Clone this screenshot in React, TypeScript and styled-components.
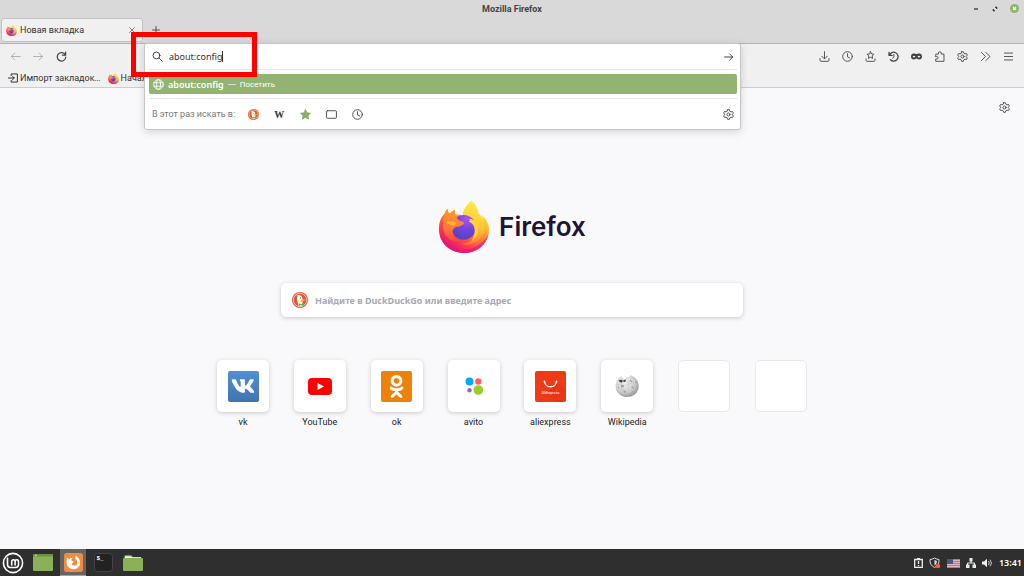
import React, { useState } from 'react';
import styled, { createGlobalStyle, css } from 'styled-components';
import { FaVk, FaOdnoklassniki } from 'react-icons/fa';

const Global = createGlobalStyle`
  *, *::before, *::after { box-sizing: border-box; }
  body { margin: 0; background: #f9f9fb; font-family: Roboto, "Noto Sans", sans-serif; font-size: 9px; color: #333; }
  button, input { font: inherit; color: inherit; }
  button { border: 0; padding: 0; background: none; cursor: pointer; }
  svg { display: block; flex: none; }
`;

const Desktop = styled.div`
  display: flex;
  flex-direction: column;
  min-height: 100vh;
`;

const TitleBar = styled.header`
  display: grid;
  grid-template-columns: 1fr auto 1fr;
  align-items: center;
  height: 17px;
  padding: 0 5px;
  background: #d9d9d9;
  color: #444;
`;

const WindowTitle = styled.h1`
  grid-column: 2;
  margin: 0;
  font-size: 9px;
  line-height: 16px;
  font-weight: 700;
`;

const WindowControls = styled.div`
  display: flex;
  justify-content: flex-end;
  gap: 9px;
`;

const TabStrip = styled.div`
  display: flex;
  align-items: center;
  height: 26px;
  padding: 0 1px;
  background: #d9d9d9;
`;

const Tab = styled.div`
  display: flex;
  align-items: center;
  gap: 3px;
  width: 142px;
  height: 24px;
  padding: 0 5px 0 4px;
  border: 1px solid #c2c2c2;
  border-radius: 3px;
  background: #f0f0f0;
`;

const TabTitle = styled.span`
  flex: 1;
  line-height: 12px;
`;

const IconButton = styled.button<{ $size?: number; $faded?: boolean }>`
  display: grid;
  place-items: center;
  width: ${(p) => p.$size ?? 23}px;
  height: ${(p) => p.$size ?? 23}px;
  color: ${(p) => (p.$faded ? '#a8a8a8' : '#444')};
`;

const Chrome = styled.div`
  border-top: 1px solid #b2b2b2;
  border-bottom: 1px solid #ccc;
  background: #f0f0f0;
`;

const NavBar = styled.nav`
  display: flex;
  align-items: center;
  height: 25px;
  padding: 0 4px;
`;

const UrlSlot = styled.div`
  position: relative;
  flex: 1;
  align-self: stretch;
  margin: 0 72px 0 71px;
`;

const UrlPanel = styled.div`
  position: absolute;
  z-index: 1;
  top: -1px;
  left: 0;
  right: 0;
  padding: 0 3px 0 4px;
  border: 1px solid #c4c4c4;
  border-radius: 3px;
  background: #fff;
  box-shadow: 0 2px 8px rgba(0, 0, 0, 0.15);
`;

const UrlRow = styled.form`
  display: flex;
  align-items: center;
  gap: 6px;
  height: 26px;
  padding: 0 3px;
  border-bottom: 1px solid #e4e4e4;
`;

const UrlField = styled.div`
  display: flex;
  flex: 1;
  align-items: center;
  min-width: 0;
`;

const UrlInput = styled.input`
  field-sizing: content;
  padding: 0;
  border: 0;
  outline: 0;
  background: none;
  caret-color: transparent;
  font-family: "Noto Sans", sans-serif;
  font-size: 9px;
  line-height: 14px;
`;

const Caret = styled.span`
  width: 1px;
  height: 11px;
  margin-left: -1px;
  background: #333;
`;

const Suggestion = styled.button`
  display: flex;
  align-items: center;
  gap: 4px;
  width: 100%;
  height: 20px;
  margin: 4px 0;
  padding: 0 4px;
  border-radius: 2px;
  background: #92b372;
  color: #fff;
`;

const SuggestedUrl = styled.span`
  font-family: "Noto Sans", sans-serif;
  font-weight: 600;
`;

const Visit = styled.span`
  font-size: 8px;
`;

const Dash = styled.span`
  width: 8px;
  height: 1px;
  background: #d5e2c8;
`;

const Engines = styled.div`
  display: flex;
  align-items: center;
  height: 31px;
  padding: 0 3px;
  border-top: 1px solid #e4e4e4;
  color: #777;
`;

const EngineList = styled.div`
  display: flex;
  flex: 1;
  margin-left: 5px;
`;

const Bookmarks = styled.div`
  display: flex;
  align-items: center;
  gap: 7px;
  height: 18px;
  padding: 0 8px;
`;

const Bookmark = styled.a`
  display: flex;
  align-items: center;
  gap: 2px;
  color: #333;
  text-decoration: none;
  white-space: nowrap;
`;

const Page = styled.main`
  position: relative;
  display: flex;
  flex: 1;
  flex-direction: column;
  align-items: center;
  padding: 113px 16px 0;
  background: #f9f9fb;
`;

const Customize = styled.div`
  position: absolute;
  top: 8px;
  right: 8px;
`;

const Brand = styled.div`
  display: flex;
  align-items: center;
  gap: 9px;
  height: 52px;
`;

const Wordmark = styled.span`
  color: #20123a;
  font-family: Inter, sans-serif;
  font-size: 26px;
  font-weight: 600;
  line-height: 32px;
`;

const Card = css`
  background: #fff;
  border-radius: 5px;
  box-shadow: 0 1px 4px rgba(58, 57, 68, 0.24);
`;

const SearchBox = styled.label`
  ${Card}
  display: flex;
  align-items: center;
  gap: 7px;
  width: 100%;
  max-width: 462px;
  height: 34px;
  margin-top: 30px;
  padding: 0 11px;
`;

const SearchInput = styled.input`
  flex: 1;
  padding: 0;
  border: 0;
  outline: 0;
  background: none;
  font-family: "Noto Sans", sans-serif;
  font-size: 9px;
  font-weight: 700;
  &::placeholder { color: #a9a8b2; opacity: 1; }
`;

const Tiles = styled.div`
  display: flex;
  justify-content: space-between;
  width: 100%;
  max-width: 590px;
  margin-top: 43px;
`;

const Tile = styled.a`
  display: flex;
  flex-direction: column;
  align-items: center;
  gap: 4px;
  width: 52px;
  color: #222;
  line-height: 12px;
  text-decoration: none;
`;

const TileFace = styled.span<{ $empty?: boolean }>`
  ${Card}
  display: grid;
  place-items: center;
  width: 52px;
  height: 52px;
  ${(p) => p.$empty && css`box-shadow: none; border: 1px solid #e8e8ea;`}
`;

const Badge = styled.span<{ $bg: string }>`
  display: grid;
  place-items: center;
  width: 31px;
  height: 31px;
  border-radius: 2px;
  background: ${(p) => p.$bg};
  color: #fff;
`;

const Taskbar = styled.footer`
  display: flex;
  align-items: center;
  justify-content: space-between;
  height: 27px;
  background: #2f2f2f;
  color: #fff;
`;

const Launchers = styled.div`
  display: flex;
  gap: 4px;
`;

const Launcher = styled.button<{ $active?: boolean }>`
  display: grid;
  place-items: center;
  width: 26px;
  height: 27px;
  ${(p) => p.$active && css`background: #656565; border-bottom: 1px solid #92b372;`}
`;

const Tray = styled.div`
  display: flex;
  align-items: center;
  gap: 6px;
  padding: 1px 2px 0 0;
`;

const Clock = styled.time`
  font-family: "Noto Sans", sans-serif;
  font-size: 9px;
  font-weight: 600;
  line-height: 12px;
`;

const Highlight = styled.div`
  position: absolute;
  z-index: 2;
  top: -12px;
  left: -13px;
  width: 126px;
  height: 45px;
  border: 5px solid #fe0000;
  pointer-events: none;
`;

function Firefox({ size, id }: { size: number; id: string }) {
  const u = (n: string) => `url(#${id}${n})`;
  return (
    <svg width={size} height={size} viewBox="0 0 152 156" aria-hidden="true">
      <defs>
        <linearGradient id={id + 'a'} x1="0.85" y1="0.1" x2="0.25" y2="0.95">
          <stop offset="0" stopColor="#fff44f" />
          <stop offset="0.3" stopColor="#ffb52e" />
          <stop offset="0.55" stopColor="#ff7139" />
          <stop offset="0.8" stopColor="#fb3551" />
          <stop offset="1" stopColor="#e01078" />
        </linearGradient>
        <radialGradient id={id + 'b'} cx="0.65" cy="0.15" r="0.9">
          <stop offset="0" stopColor="#a855f0" />
          <stop offset="0.5" stopColor="#7542e0" />
          <stop offset="1" stopColor="#4d45b8" />
        </radialGradient>
        <linearGradient id={id + 'c'} x1="0.7" y1="0" x2="0.5" y2="1">
          <stop offset="0" stopColor="#fff14d" />
          <stop offset="0.55" stopColor="#ffc735" />
          <stop offset="1" stopColor="#ff7a36" />
        </linearGradient>
        <linearGradient id={id + 'd'} x1="0" y1="0" x2="0" y2="1">
          <stop offset="0" stopColor="#ff9a2b" />
          <stop offset="0.6" stopColor="#ff7a38" />
          <stop offset="1" stopColor="#fd4a48" />
        </linearGradient>
      </defs>
      <path fill={u('a')} d="M99 0C111 11 118 24 119 38C126 42 130 48 133 55C133 49 131 44 129 41C142 51 152 70 151 87C150 127 118 156 77 156C34 156 0 125 1 83C1 61 9 46 19 37C20 31 22 27 27 23C27 31 29 35 33 38C38 32 43 28 49 26C47 32 48 38 51 41C58 39 67 41 73 44C73 28 84 10 99 0Z" />
      <path fill="#e31587" opacity="0.7" d="M3 99C16 134 49 151 86 145C113 140 138 123 149 98C143 133 113 156 77 156C40 156 9 133 3 99Z" />
      <path fill={u('c')} d="M99 0C111 11 118 24 119 38C137 51 143 82 131 102C119 125 92 136 70 128C94 128 113 113 116 92C118 72 108 54 91 47C83 43 78 41 73 44C73 28 84 10 99 0Z" />
      <circle cx="75" cy="79" r="37" fill={u('b')} />
      <path fill={u('d')} d="M19 37C20 31 22 27 27 23C27 31 29 35 33 38C38 32 43 28 49 26C47 32 48 38 51 41C52 47 56 53 61 58C67 62 76 61 76 66C76 71 67 74 60 77C51 77 43 80 42 92C43 105 50 113 62 118C42 126 17 108 14 84C12 67 13 49 19 37Z" />
      <path fill="#ffb52e" d="M22 64C32 59 45 60 54 66C51 71 44 77 38 73C32 69 27 68 22 64Z" />
      <path fill="#ffd03a" d="M90 54C107 51 121 67 118 89C116 105 108 116 98 120C108 106 111 88 105 75C102 67 96 64 90 62C95 60 96 57 90 54Z" />
    </svg>
  );
}

function Duck({ size }: { size: number }) {
  return (
    <svg width={size} height={size} viewBox="0 0 48 48" aria-hidden="true">
      <circle cx="24" cy="24" r="24" fill="#de5833" />
      <circle cx="24" cy="24" r="20" fill="none" stroke="#fff" strokeWidth="2" />
      <path fill="#fff" d="M15 10C22 7 31 11 31 20C32 25 31 32 33 40C28 43 23 43 20 41C18 33 15 26 15 20C15 16 18 14 15 10Z" />
      <path fill="#fdb913" d="M25 24C30 22 36 20 39 23C37 28 31 27 33 30C28 31 24 28 25 24Z" />
      <path fill="#57b747" d="M20 34L28 36L35 32V42L28 39L21 42Z" />
      <circle cx="25" cy="18" r="2" fill="#2d4f8e" />
    </svg>
  );
}

type IconName = keyof typeof shapes;
const shapes = {
  back: <path d="M15 8H2M7 3L2 8l5 5" />,
  forward: <path d="M1 8h13M9 3l5 5-5 5" />,
  reload: <path d="M13.500 5.500A6.200 6.200 0 1 0 14.200 9M14 1.500v4.500H9.500" strokeWidth="1.800" />,
  search: <><circle cx="6.500" cy="6.500" r="5" /><path d="M10.200 10.200L15 15" /></>,
  close: <path d="M3 3l10 10M13 3L3 13" />,
  plus: <path d="M8 1v14M1 8h14" />,
  download: <path d="M8 1v10M4 7.500l4 4 4-4M1.500 11v2.500q0 1.500 1.500 1.500h10q1.500 0 1.500-1.500V11" />,
  clock: <><circle cx="8" cy="8" r="7" /><path d="M8 4v4.500l3 1.500" /></>,
  starTray: <path d="M8 1l1.500 3.200 3.500.5-2.500 2.500.6 3.500L8 9.100l-3.100 1.600.6-3.500L3 4.700l3.500-.5zM1.500 11.500v2q0 1.500 1.500 1.500h10q1.500 0 1.500-1.500v-2" />,
  history: <><path d="M1.500 2v4.500H6M2 6.200A6.500 6.500 0 1 1 3.500 12.800" strokeWidth="1.900" /><path d="M8.500 5v4L6.500 10.500" /></>,
  mask: <path fill="currentColor" fillRule="evenodd" stroke="none" d="M4 3.500C6 3.500 7 4.300 8 4.300S10 3.500 12 3.500C15 3.500 16 5.500 16 8S14.500 12.500 12 12.500C10 12.500 9 11 8 11S6 12.500 4 12.500C1.500 12.500 0 10.500 0 8S1 3.500 4 3.500ZM2.300 8.300C3.200 6.500 5.500 6.500 6.500 8.300C5.500 9.800 3.200 9.800 2.300 8.300ZM9.500 8.300C10.500 6.500 12.800 6.500 13.700 8.300C12.800 9.800 10.500 9.800 9.500 8.300Z" />,
  puzzle: <path d="M2.500 6.500V4.500h4V3q0-2 2-2t2 2v1.500h4V15h-12v-3.500H4q2 0 2-1.700T4 8H2.500z" />,
  gear: (
    <>
      <path d="M6.700 1h2.600l.6 2.200 1.700 1 2.200-.6 1.300 2.300L13.500 7.500v1l1.600 1.600-1.300 2.300-2.200-.6-1.700 1-.6 2.200H6.700l-.6-2.200-1.700-1-2.200.6L.9 10.100l1.600-1.600v-1L.9 5.900l1.300-2.300 2.200.6 1.700-1z" />
      <circle cx="8" cy="8" r="2.200" />
    </>
  ),
  more: <path d="M2 2l6 6-6 6M8.500 2l6 6-6 6" />,
  menu: <path d="M2 3h12M2 8h12M2 13h12" />,
  globe: <><circle cx="8" cy="8" r="7" /><ellipse cx="8" cy="8" rx="3" ry="7" /><path d="M1.500 5.500h13M1.500 10.500h13" /></>,
  importIn: <path d="M5 4V1.500h10v13H5V12M0 8h10M7 5l3 3-3 3" />,
  tabs: <rect x="0.800" y="2.500" width="14.400" height="11" rx="1.500" />,
  star: <path fill="#86b165" stroke="#86b165" d="M8 1l2.200 4.600 5 .6-3.700 3.500 1 5L8 12.200 3.500 14.700l1-5L.8 6.200l5-.6z" />,
};

function Icon({ name, size = 11, weight = 1.3 }: { name: IconName; size?: number; weight?: number }) {
  return (
    <svg width={size} height={size} viewBox="0 0 16 16" fill="none" stroke="currentColor" strokeWidth={weight} strokeLinejoin="round" strokeLinecap="round" aria-hidden="true">
      {shapes[name]}
    </svg>
  );
}

const YouTube = () => (
  <svg width="24" height="17" viewBox="0 0 24 17"><rect width="24" height="17" rx="4" fill="#f00" /><path d="M9.500 5v7l6.500-3.500z" fill="#fff" /></svg>
);

const Avito = () => (
  <svg width="18" height="18" viewBox="0 0 18 18">
    <circle cx="4.500" cy="4.500" r="4" fill="#0af" /><circle cx="13.300" cy="4.500" r="3.200" fill="#ff6163" />
    <circle cx="4.500" cy="13.200" r="2.200" fill="#965eeb" /><circle cx="13.300" cy="13" r="4.800" fill="#97cf26" />
  </svg>
);

const AliExpress = () => (
  <svg width="31" height="31" viewBox="0 0 31 31">
    <rect width="31" height="31" rx="2" fill="#f03a17" />
    <path d="M22 11L31 20V29q0 2-2 2H21L12 22z" fill="#df3212" opacity="0.5" />
    <path d="M9.500 10.500C10.500 17.500 20.500 17.500 21.500 10.500" fill="none" stroke="#fff" strokeWidth="1.300" />
    <circle cx="9.500" cy="10.500" r="0.900" fill="#fff" /><circle cx="21.500" cy="10.500" r="0.900" fill="#fff" />
    <text x="15.500" y="23" textAnchor="middle" fontSize="4" fontFamily="Lato, sans-serif" fill="#fff">AliExpress</text>
  </svg>
);

const Wikipedia = () => (
  <svg width="24" height="24" viewBox="0 0 72 72">
    <defs><radialGradient id="wk" cx="0.4" cy="0.35" r="0.7"><stop offset="0" stopColor="#f0f0f0" /><stop offset="0.6" stopColor="#d2d2d2" /><stop offset="1" stopColor="#8a8a8a" /></radialGradient></defs>
    <path fill="url(#wk)" d="M14 10L20 6L23 13L31 15L35 8L39 11L47 4C62 9 71 21 71 37C71 56 55 69 36 69C17 69 2 55 2 36C2 25 7 16 14 10Z" />
    <path fill="#444" d="M11 19L19 17L24 20L31 16L33 22L29 24L23 22L20 26L14 24Z" />
    <path fill="none" stroke="#bbb" strokeWidth="1.200" d="M4 33Q14 28 20 33T37 31T54 33T70 31M5 48Q17 44 24 49T44 48T66 49M20 27Q16 40 22 50T28 68M38 22Q44 36 39 48T44 68M56 9Q52 23 57 36T53 63" />
    <path fill="none" stroke="#777" strokeWidth="2" d="M20 34h5v5h-5zM43 22l5-3 2 6M49 39h5v5M25 51l6 2-2 4M51 55l3-3M9 38l2 4M61 23l3 4" />
  </svg>
);

const Mint = () => (
  <svg width="22" height="22" viewBox="0 0 22 22" fill="none" stroke="#fff" strokeWidth="1.600">
    <circle cx="11" cy="11" r="9.600" />
    <path d="M5.500 6v6.500q0 3 3 3h5q3 0 3-3V9.500q0-1.700-1.700-1.700t-1.700 1.700V13M13.100 9.500q0-1.700-1.700-1.700T9.700 9.500V13" strokeLinecap="round" />
  </svg>
);

const Desk = () => (
  <svg width="20" height="17" viewBox="0 0 20 17"><rect width="20" height="17" rx="1" fill="#8bb158" /><path d="M0 1q0-1 1-1h18q1 0 1 1v1.500H0z" fill="#6c9140" /><path d="M2 1.300h2" stroke="#cfe0b8" /></svg>
);

const FirefoxTask = () => (
  <svg width="19" height="19" viewBox="0 0 54 54">
    <rect width="54" height="54" rx="8" fill="#f58a3c" />
    <path fill="#fff" d="M9 13L15 17C19 14 23 14 25 15C21 17 20 20 22 22L28 24C26 28 22 28 22 32C25 37 34 36 37 31C39 26 37 21 33 17C31 14 32 11 34 8C43 13 48 24 45 34C40 45 28 49 18 44C8 39 5 27 9 13Z" />
  </svg>
);

const Terminal = () => (
  <svg width="19" height="19" viewBox="0 0 19 19">
    <rect x="0.500" y="0.500" width="18" height="18" rx="3" fill="#222" stroke="#444" />
    <text x="2.500" y="7" fontSize="6" fontFamily="Liberation Mono, monospace" fontWeight="700" fill="#fff">$_</text>
  </svg>
);

const Folder = () => (
  <svg width="20" height="16" viewBox="0 0 20 16"><path d="M1 2q0-2 2-2h5l2 2h7q2 0 2 2H1z" fill="#6f9544" /><path d="M2 1.200h6l1.500 1H18v2H2z" fill="#f4f4f4" /><rect y="3" width="20" height="13" rx="1" fill="#8bb158" /></svg>
);

const Update = () => (
  <svg width="9" height="10" viewBox="0 0 9 10" fill="none" stroke="#eee" strokeWidth="1.300"><path d="M.7 1.500h7.600v7.800H.7zM3 .7h3" /><path d="M4.500 3v3M4.500 7v1.200" /></svg>
);

const Shield = () => (
  <svg width="12" height="12" viewBox="0 0 12 12"><path d="M5.500 1Q8 2.500 10 2.500Q10.500 8 5.500 10.500Q.5 8 1 2.500Q3 2.500 5.500 1Z" fill="none" stroke="#ddd" /><path d="M5.500 3v5.500Q8 7 8 4Z" fill="#ddd" /><circle cx="9" cy="9" r="2.300" fill="#f0642d" /></svg>
);

const Flag = () => (
  <svg width="13" height="9" viewBox="0 0 13 9"><rect width="13" height="9" fill="#dcb9bd" /><path d="M0 .5h13M0 2.500h13M0 4.500h13M0 6.500h13M0 8.500h13" stroke="#c9737c" /><rect width="6" height="5" fill="#4a558c" /></svg>
);

const Network = () => (
  <svg width="10" height="10" viewBox="0 0 10 10"><path d="M3.500 0h3v3.500h-3zM0 6.500h3.500V10H0zM6.500 6.500H10V10H6.500z" fill="#eee" /><path d="M5 3v2M1.500 7V5h7v2" fill="none" stroke="#eee" /></svg>
);

const Speaker = () => (
  <svg width="11" height="10" viewBox="0 0 11 10"><path d="M0 3.500h2L5 .8v8.400L2 6.500H0z" fill="#eee" /><path d="M6.500 3q1.500 2 0 4M8 1.700q3 3.300 0 6.600" fill="none" stroke="#ccc" /></svg>
);

const tools: [IconName, string][] = [
  ['download', 'Загрузки'], ['clock', 'История'], ['starTray', 'Закладки'], ['history', 'Восстановить'],
  ['mask', 'Приватное окно'], ['puzzle', 'Расширения'], ['gear', 'Настройки'], ['more', 'Ещё'], ['menu', 'Меню'],
];

const sites = [
  { name: 'vk', face: <Badge $bg="linear-gradient(#5190d3, #3f74b0)"><FaVk size={24} /></Badge> },
  { name: 'YouTube', face: <YouTube /> },
  { name: 'ok', face: <Badge $bg="#ee8208"><FaOdnoklassniki size={23} /></Badge> },
  { name: 'avito', face: <Avito /> },
  { name: 'aliexpress', face: <AliExpress /> },
  { name: 'Wikipedia', face: <Wikipedia /> },
];

const Wiki = styled.span`
  font-family: "Liberation Serif", serif;
  font-size: 10px;
  font-weight: 700;
  color: #333;
`;

export default function App() {
  const [url, setUrl] = useState('about:config');
  return (
    <Desktop>
      <Global />
      <TitleBar>
        <WindowTitle>Mozilla Firefox</WindowTitle>
        <WindowControls>
          <IconButton $size={10} aria-label="Свернуть"><svg width="6" height="6" viewBox="0 0 6 6"><path d="M1 3h4" stroke="#333" strokeWidth="1.300" /></svg></IconButton>
          <IconButton $size={10} aria-label="Развернуть"><svg width="6" height="6" viewBox="0 0 6 6"><path d="M3 1h2v2zM1 3v2h2z" fill="#333" stroke="#333" strokeWidth="0.600" /></svg></IconButton>
          <IconButton $size={10} aria-label="Закрыть"><svg width="9" height="9" viewBox="0 0 9 9"><circle cx="4.500" cy="4.500" r="4.500" fill="#8fb56c" /><path d="M3 3l3 3M6 3L3 6" stroke="#fff" strokeWidth="1.200" /></svg></IconButton>
        </WindowControls>
      </TitleBar>
      <TabStrip>
        <Tab>
          <Firefox size={11} id="t" />
          <TabTitle>Новая вкладка</TabTitle>
          <IconButton $size={10} aria-label="Закрыть вкладку"><Icon name="close" size={8} /></IconButton>
        </Tab>
        <IconButton $size={26} aria-label="Новая вкладка"><Icon name="plus" size={8} weight={1.8} /></IconButton>
      </TabStrip>
      <Chrome>
        <NavBar>
          <IconButton $faded aria-label="Назад"><Icon name="back" /></IconButton>
          <IconButton $faded aria-label="Вперёд"><Icon name="forward" /></IconButton>
          <IconButton aria-label="Обновить"><Icon name="reload" /></IconButton>
          <UrlSlot>
            <UrlPanel>
              <UrlRow onSubmit={(e) => e.preventDefault()}>
                <Icon name="search" size={11} />
                <UrlField>
                  <UrlInput aria-label="Адрес" value={url} onChange={(e) => setUrl(e.target.value)} />
                  <Caret />
                </UrlField>
                <IconButton $size={11} aria-label="Перейти"><Icon name="forward" size={10} weight={1.6} /></IconButton>
              </UrlRow>
              <Suggestion>
                <Icon name="globe" size={11} />
                <SuggestedUrl>about:config</SuggestedUrl>
                <Dash />
                <Visit>Посетить</Visit>
              </Suggestion>
              <Engines>
                В этот раз искать в:
                <EngineList>
                  <IconButton $size={26} aria-label="DuckDuckGo"><Duck size={11} /></IconButton>
                  <IconButton $size={26}><Wiki>W</Wiki></IconButton>
                  <IconButton $size={26} aria-label="Закладки"><Icon name="star" /></IconButton>
                  <IconButton $size={26} aria-label="Вкладки"><Icon name="tabs" /></IconButton>
                  <IconButton $size={26} aria-label="Журнал"><Icon name="clock" /></IconButton>
                </EngineList>
                <IconButton $size={11} aria-label="Настройки поиска"><Icon name="gear" /></IconButton>
              </Engines>
            </UrlPanel>
            <Highlight />
          </UrlSlot>
          {tools.map(([name, label]) => (
            <IconButton key={name} aria-label={label}><Icon name={name} /></IconButton>
          ))}
        </NavBar>
        <Bookmarks>
          <Bookmark href="#import"><Icon name="importIn" size={10} weight={1.6} />Импорт закладок…</Bookmark>
          <Bookmark href="#start"><Firefox size={11} id="b" />Начал</Bookmark>
        </Bookmarks>
      </Chrome>
      <Page>
        <Customize><IconButton aria-label="Настроить страницу"><Icon name="gear" /></IconButton></Customize>
        <Brand>
          <Firefox size={52} id="f" />
          <Wordmark>Firefox</Wordmark>
        </Brand>
        <SearchBox>
          <Duck size={16} />
          <SearchInput aria-label="Поиск" placeholder="Найдите в DuckDuckGo или введите адрес" />
        </SearchBox>
        <Tiles>
          {sites.map((s) => (
            <Tile key={s.name} href={'#' + s.name}><TileFace>{s.face}</TileFace>{s.name}</Tile>
          ))}
          <TileFace $empty />
          <TileFace $empty />
        </Tiles>
      </Page>
      <Taskbar>
        <Launchers>
          <Launcher aria-label="Меню"><Mint /></Launcher>
          <Launcher aria-label="Рабочий стол"><Desk /></Launcher>
          <Launcher $active aria-label="Firefox"><FirefoxTask /></Launcher>
          <Launcher aria-label="Терминал"><Terminal /></Launcher>
          <Launcher aria-label="Файлы"><Folder /></Launcher>
        </Launchers>
        <Tray><Update /><Shield /><Flag /><Network /><Speaker /><Clock>13:41</Clock></Tray>
      </Taskbar>
    </Desktop>
  );
}
